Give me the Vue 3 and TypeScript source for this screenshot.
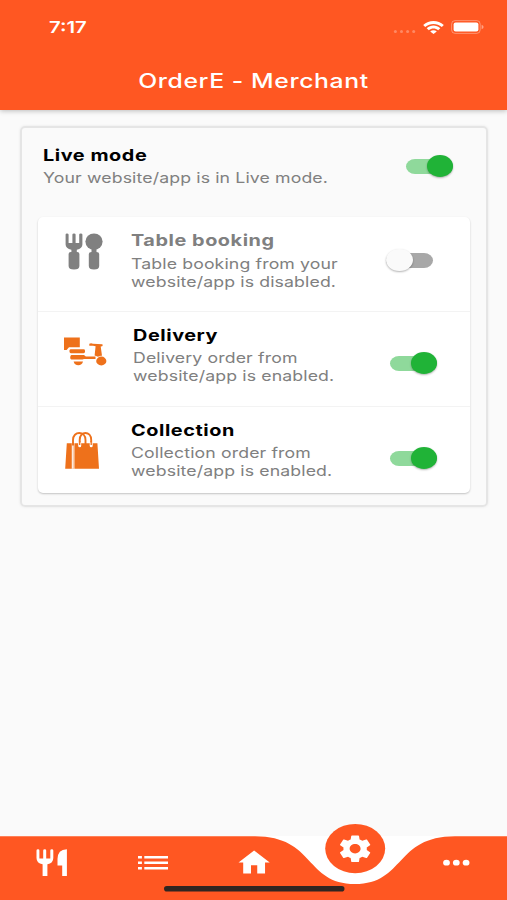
<script setup lang="ts">
import { ref } from 'vue'

interface Service {
  id: 'table' | 'delivery' | 'collection'
  title: string
  lines: [string, string]
  enabled: boolean
}

const liveMode = ref(true)
const services = ref<Service[]>([
  { id: 'table', title: 'Table booking', lines: ['Table booking from your', 'website/app is disabled.'], enabled: false },
  { id: 'delivery', title: 'Delivery', lines: ['Delivery order from', 'website/app is enabled.'], enabled: true },
  { id: 'collection', title: 'Collection', lines: ['Collection order from', 'website/app is enabled.'], enabled: true },
])
</script>

<template>
  <div class="screen">
    <header class="header">
      <div class="status">
        <span class="time">7:17</span>
        <svg class="signal" width="24" height="5" viewBox="0 0 24 5">
          <circle v-for="n in 4" :key="n" :cx="n * 6.1 - 3.7" cy="2.5" r="1.5" />
        </svg>
        <svg class="wifi" width="21" height="13" viewBox="0 0 21 13" preserveAspectRatio="none">
          <path d="M0.2 4.1 C6 -1.3 15 -1.3 20.8 4.1 L18.8 6.1 C14 1.8 7 1.8 2.2 6.1 Z" />
          <path d="M3.7 7.3 C7.7 3.6 13.3 3.6 17.3 7.3 L15.2 9.3 C12.4 6.9 8.6 6.9 5.8 9.3 Z" />
          <path d="M7.2 10.4 C9.1 8.7 11.9 8.7 13.8 10.4 L10.5 13 Z" />
        </svg>
        <svg class="battery" width="33" height="14" viewBox="0 0 33 14">
          <rect x="0.6" y="0.6" width="28.6" height="12.8" rx="3.5" fill="none" stroke="#fff" stroke-opacity=".35" />
          <rect x="2.6" y="2.4" width="24.8" height="9.2" rx="2" fill="#fff" />
          <path d="M30.6 4.8 Q32.6 5.6 32.6 7 Q32.6 8.4 30.6 9.2Z" fill="#fff" fill-opacity=".45" />
        </svg>
      </div>
      <h1 class="title">OrderE - Merchant</h1>
    </header>

    <main class="content">
      <section class="panel">
        <div class="live">
          <div class="copy">
            <h2 class="name">Live mode</h2>
            <p class="desc">Your website/app is in Live mode.</p>
          </div>
          <button class="switch" :class="{ on: liveMode }" role="switch" :aria-checked="liveMode" @click="liveMode = !liveMode">
            <span class="thumb"></span>
          </button>
        </div>

        <ul class="services">
          <li v-for="s in services" :key="s.id" class="service" :class="[s.id, { off: !s.enabled }]">
            <div class="icon">
              <svg v-if="s.id === 'table'" width="38" height="37" viewBox="0 0 38 37">
                <path d="M0.6 1.5 Q0.6 0.4 2 0.4 T3.6 1.5 V10 H7.4 V1.5 Q7.4 0.4 9 0.4 T10.6 1.5 V10 H14.2 V1.5 Q14.2 0.4 15.8 0.4 T17.4 1.5 V11.5 Q17.4 15.4 11.8 16.7 V19 H12.2 Q14.4 19.2 14.4 21 V33 Q14.4 36.5 9 36.5 T3.6 33 V21 Q3.6 19.2 5.8 19 H6.4 V16.7 Q0.6 15.4 0.6 11.5Z" />
                <ellipse cx="29" cy="8.6" rx="8.6" ry="8.2" />
                <path d="M26.5 15 H31.5 V19 Q34.2 19.2 34.2 21 V33 Q34.2 36.5 29 36.5 T23.8 33 V21 Q23.8 19.2 26.5 19Z" />
              </svg>
              <svg v-else-if="s.id === 'delivery'" width="43" height="29" viewBox="0 0 43 29">
                <path d="M0 0.5 H15.8 V10.2 H5 L2.6 13 H0Z" />
                <rect x="5.5" y="12.2" width="15.5" height="4" rx="1.4" />
                <path d="M7.4 18 H20 L21.8 19.5 H31.5 V22 H20 L18.5 22.6 H7.4 Q6.2 22.4 6.2 20.4 T7.4 18Z" />
                <path d="M9.6 24.5 H19 Q18 28.3 14.3 28.3 T9.6 24.5Z" />
                <path d="M25.3 6.8 Q27 5.9 29 6.8 L38.2 7.3 Q39.4 8 38.2 9.2 L36.7 9.6 L38 18.7 Q36 18.4 34 19.7 L30.6 18.5 L31.6 9.3 L29 8.7 H25.3Z" />
                <ellipse cx="37.3" cy="24" rx="5.1" ry="4.4" />
              </svg>
              <svg v-else width="34" height="37" viewBox="0 0 34 37">
                <path d="M1.8 11.3 H6.3 V36.7 H0.2Z M9.4 11.3 H32.4 L34 36.7 H9.4Z" />
                <path d="M6.3 11.3 H9 V36.7 H6.3Z" />
                <path d="M8 12 V8 C8 -1.4 20.5 -1.4 20.5 8 V13 M14.7 13 V8 C14.7 -1.4 26.2 -1.4 26.2 8 V13" fill="none" stroke="#ee711b" stroke-width="1.9" />
                <path d="M7.9 13.5 V36.7" fill="none" stroke="#fff" stroke-width="1.5" />
                <path d="M14.7 11.4 V13.8 M26.2 11.4 V13.8" stroke="#fff" stroke-width="3" stroke-linecap="round" />
                <path d="M14.7 9 V13 M26.2 9 V13" stroke="#ee711b" stroke-width="1.3" />
              </svg>
            </div>
            <div class="copy">
              <h3 class="name">{{ s.title }}</h3>
              <p class="desc">{{ s.lines[0] }}<br />{{ s.lines[1] }}</p>
            </div>
            <button class="switch" :class="{ on: s.enabled }" role="switch" :aria-checked="s.enabled" @click="s.enabled = !s.enabled">
              <span class="thumb"></span>
            </button>
          </li>
        </ul>
      </section>
    </main>

    <nav class="nav">
      <svg width="507" height="77" viewBox="0 823 507 77">
        <rect x="0" y="836" width="507" height="64" fill="#fff" />
        <path d="M0 836.2 H255 C315 836.2 305 884 355 884 S395 836.2 455 836.2 H507 V900 H0Z" fill="#ff5722" />
        <ellipse cx="355.2" cy="848.6" rx="30" ry="24.6" fill="#ff5722" />
        <g fill="#fff">
          <path d="M36.5 850.5 Q36.5 849.2 38 849.2 T39.4 850.5 V858.6 H43.2 V850.5 Q43.2 849.2 44.7 849.2 T46.2 850.5 V858.6 H50.3 V850.5 Q50.3 849.2 51.8 849.2 T53.3 850.5 V858 Q53.3 863.2 47.4 864.2 V876 H42.6 V864.2 Q36.5 863.2 36.5 858Z" />
          <path d="M66.9 849.2 V876 H62.2 V865.6 H57.5 V859 Q57.5 849.5 66.9 849.2Z" />
          <path d="M138 856h3.9v2.6H138zM144.3 856H168v2.6H144.3zM138 861.5h3.9v2.6H138zM144.3 861.5H168v2.6H144.3zM138 867h3.9v2.6H138zM144.3 867H168v2.6H144.3z" />
          <path transform="translate(235.4 846.4) scale(1.56 1.35)" d="M10 20v-6h4v6h5v-8h3L12 3 2 12h3v8z" />
          <path transform="translate(336.4 832.8) scale(1.56 1.33)" d="M19.43 12.98c.04-.32.07-.64.07-.98s-.03-.66-.07-.98l2.11-1.65c.19-.15.24-.42.12-.64l-2-3.46c-.12-.22-.39-.3-.61-.22l-2.49 1c-.52-.4-1.08-.73-1.69-.98l-.38-2.65C14.46 2.18 14.25 2 14 2h-4c-.25 0-.46.18-.49.42l-.38 2.65c-.61.25-1.17.59-1.69.98l-2.49-1c-.23-.09-.49 0-.61.22l-2 3.46c-.13.22-.07.49.12.64l2.11 1.65c-.04.32-.07.65-.07.98s.03.66.07.98l-2.11 1.65c-.19.15-.24.42-.12.64l2 3.46c.12.22.39.3.61.22l2.49-1c.52.4 1.08.73 1.69.98l.38 2.65c.03.24.24.42.49.42h4c.25 0 .46-.18.49-.42l.38-2.65c.61-.25 1.17-.59 1.69-.98l2.49 1c.23.09.49 0 .61-.22l2-3.46c.12-.22.07-.49-.12-.64l-2.11-1.65zM12 15.5c-1.93 0-3.5-1.57-3.5-3.5s1.57-3.5 3.5-3.5 3.5 1.57 3.5 3.5-1.57 3.5-3.5 3.5z" />
          <ellipse cx="446.5" cy="862.7" rx="3.4" ry="2.9" />
          <ellipse cx="456.3" cy="862.7" rx="3.4" ry="2.9" />
          <ellipse cx="466.1" cy="862.7" rx="3.4" ry="2.9" />
        </g>
        <rect x="164" y="886" width="180.5" height="5.6" rx="2.8" fill="#302521" />
      </svg>
    </nav>
  </div>
</template>

<style>
body {
  background: #fafafa;
}
</style>

<style scoped>
.screen {
  width: 507px;
  height: 900px;
  display: flex;
  flex-direction: column;
  overflow: hidden;
  background: #fafafa;
  font-family: Inter, sans-serif;
}
h1, h2, h3, p, ul {
  margin: 0;
  padding: 0;
}
svg {
  display: block;
}
.header {
  flex: none;
  height: 110px;
  box-sizing: border-box;
  background: #ff5722;
  box-shadow: 0 1px 5px rgba(0, 0, 0, 0.25);
  color: #fff;
}
.status {
  height: 54px;
  display: flex;
  align-items: center;
  padding: 0 23px 0 49px;
}
.time {
  flex: 1;
  font-size: 16.5px;
  font-weight: 600;
  line-height: 20px;
  transform: scaleX(1.23);
  transform-origin: left;
}
.signal {
  margin: 9px 6px 0 0;
  fill: rgba(255, 255, 255, 0.3);
}
.wifi {
  margin-right: 7px;
  fill: #fff;
}
.title {
  text-align: center;
  font-size: 20.3px;
  font-weight: 500;
  line-height: 54px;
  letter-spacing: 0.5px;
  transform: scaleX(1.22);
}
.content {
  flex: 1;
  padding: 16px 19px 0 20px;
}
.panel {
  height: 381px;
  box-sizing: border-box;
  border: 2px solid #e5e5e5;
  border-radius: 5px;
  padding: 0 16px;
  box-shadow: 0 0 3px rgba(0, 0, 0, 0.08);
}
.live {
  height: 89px;
  display: flex;
  align-items: flex-start;
  padding: 0 17px 0 5px;
}
.live .copy {
  padding-top: 16px;
}
.live .switch {
  margin-top: 27px;
}
.copy {
  flex: 1;
  transform: scaleX(1.22);
  transform-origin: left;
  white-space: nowrap;
}
.name {
  font-size: 16.3px;
  font-weight: 700;
  line-height: 22px;
  letter-spacing: 0.45px;
  color: #000;
}
.desc {
  font-size: 14.5px;
  line-height: 18px;
  letter-spacing: 0.1px;
  color: #808080;
  margin-top: 3px;
}
.services {
  width: 432px;
  list-style: none;
  background: #fff;
  border-radius: 5px;
  box-shadow: 0 1px 2px rgba(0, 0, 0, 0.22);
}
.service {
  height: 95px;
  box-sizing: border-box;
  border-bottom: 1px solid #f3f3f3;
  display: flex;
  align-items: flex-start;
  padding: 12px 33px 0 26px;
}
.service.collection {
  height: 86px;
  border-bottom: 0;
}
.icon {
  flex: none;
  width: 67px;
  padding: 4px 0 0 1px;
  box-sizing: border-box;
  fill: #ee711b;
}
.table .icon {
  fill: #808080;
}
.delivery .icon {
  width: 69px;
  padding: 13px 0 0;
}
.collection .icon {
  padding: 13px 0 0 1px;
}
.service .switch {
  margin-top: 28px;
}
.table .switch {
  margin-top: 20px;
  margin-right: 4px;
}
.table .desc {
  margin-top: 4px;
}
.service.off .name {
  color: #808080;
}
.switch {
  flex: none;
  position: relative;
  width: 47px;
  height: 22px;
  padding: 0;
  border: 0;
  background: none;
}
.switch::before {
  content: '';
  position: absolute;
  inset: 3.5px 0;
  border-radius: 9px / 7.5px;
  background: #a8a8a8;
}
.switch.on::before {
  background: #8fd99b;
}
.thumb {
  position: absolute;
  top: 0;
  left: 0;
  width: 26.5px;
  height: 22px;
  border-radius: 50%;
  background: #fafafa;
  box-shadow: 0 1px 2px rgba(0, 0, 0, 0.3);
}
.on .thumb {
  left: auto;
  right: 0;
  background: #20b337;
}
.nav {
  flex: none;
  height: 77px;
}
</style>
